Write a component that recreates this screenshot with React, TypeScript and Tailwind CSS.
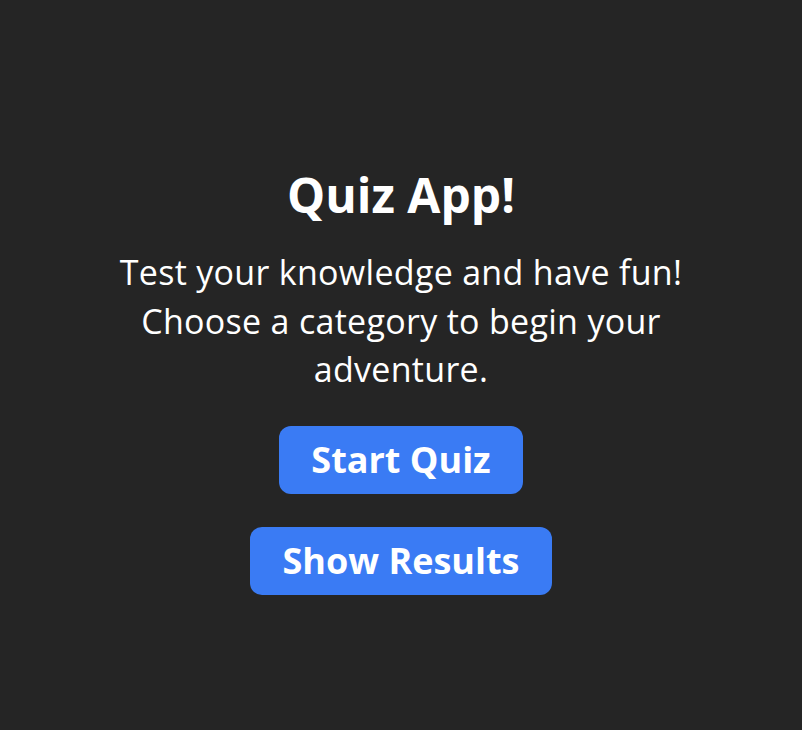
export default function App() {
  return (
    <div
      className="flex min-h-[730px] w-full flex-col items-center bg-[#252525] px-8 pt-[159px] text-center text-white"
      style={{ fontFamily: '"Open Sans", "Noto Sans", sans-serif' }}
    >
      {/* Title */}
      <h1 className="text-[48px] leading-[72px] font-bold">Quiz App!</h1>

      {/* Intro */}
      <p className="mt-[17px] max-w-[620px] text-[34px] leading-[48.5px] tracking-[0.3px]">
        Test your knowledge and have fun! Choose a category to begin your adventure.
      </p>

      {/* Actions */}
      <div className="mt-[32px] flex flex-col items-center gap-[33px]">
        <button className="rounded-xl bg-[#3a7bf4] px-8 py-[7px] text-[36px] leading-[54px] font-bold text-white">
          Start Quiz
        </button>
        <button className="rounded-xl bg-[#3a7bf4] px-8 py-[7px] text-[36px] leading-[54px] font-bold text-white">
          Show Results
        </button>
      </div>
    </div>
  );
}
